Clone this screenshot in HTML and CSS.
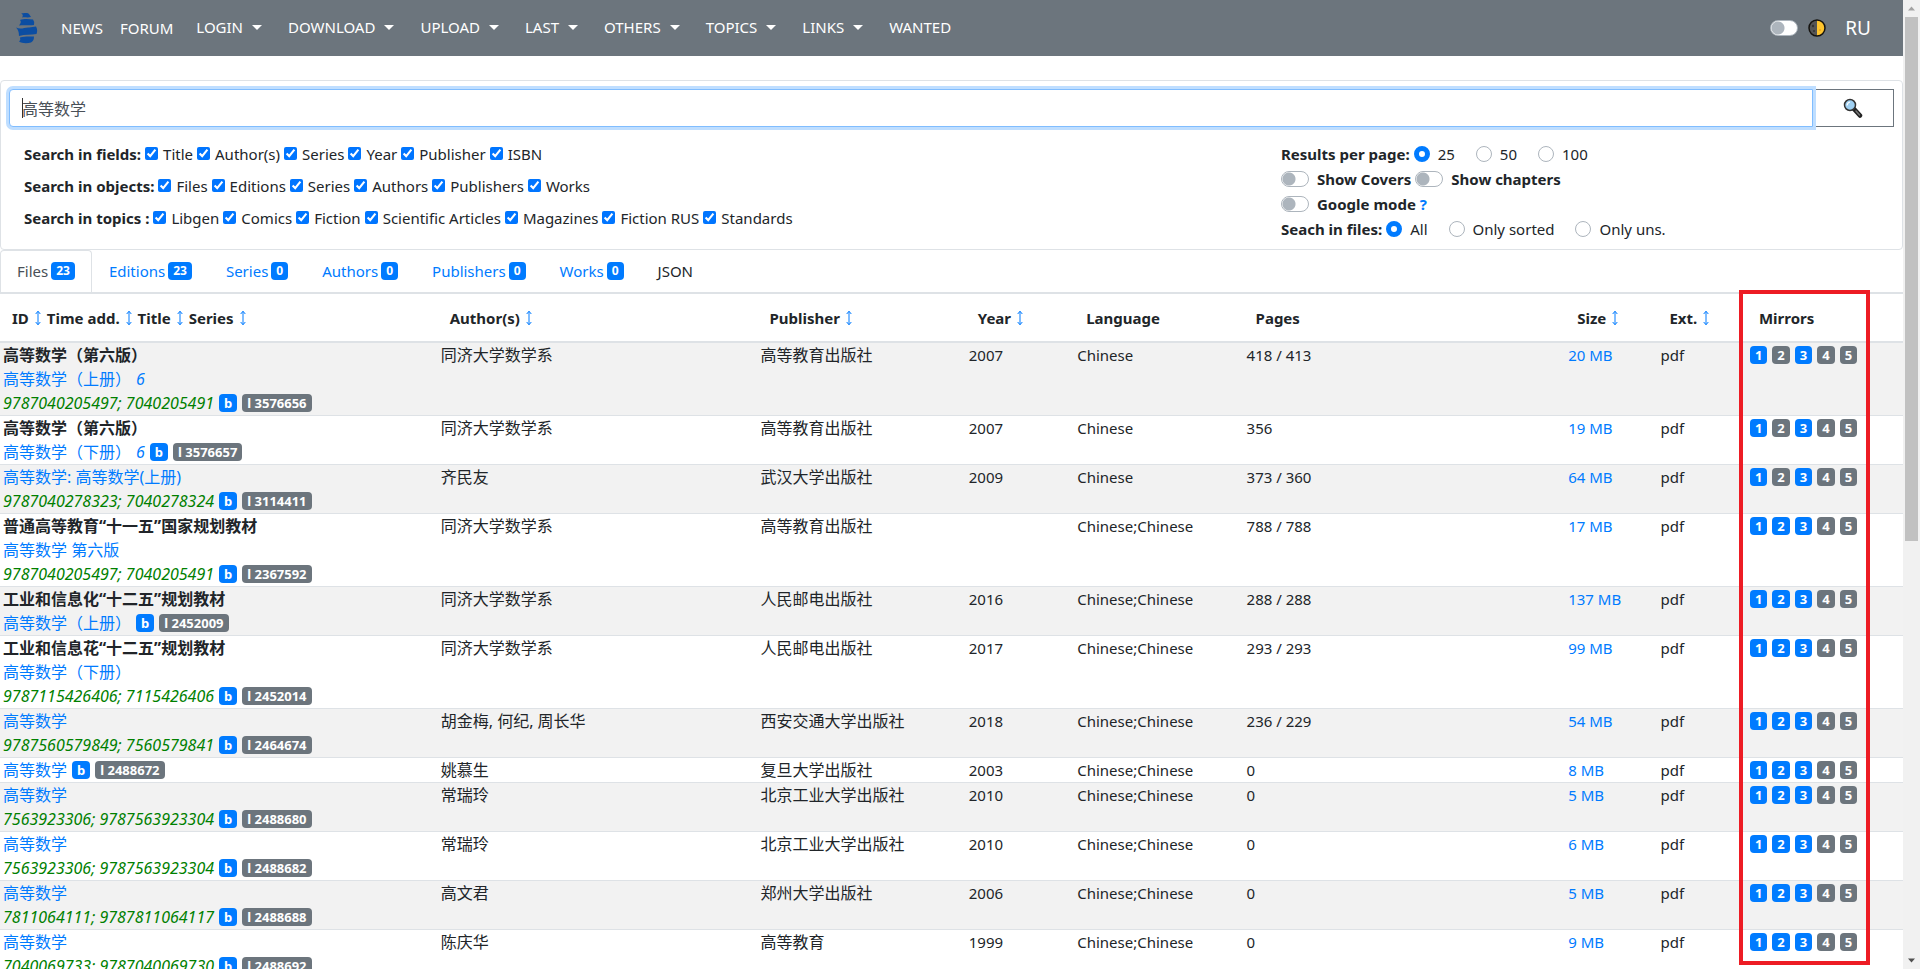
FILE: index.html
```html
<!DOCTYPE html>
<html lang="en">
<head>
<meta charset="utf-8">
<title>高等数学 - Library search</title>
<link rel="stylesheet" href="styles.css">
</head>
<body>
<svg class="defs" aria-hidden="true"><symbol id="sort" viewBox="0 0 6 16"><path d="M3 1.5V14.5M.7 4 3 1.2 5.3 4M.7 12 3 14.8 5.3 12" fill="none" stroke="currentColor" stroke-width="1"/></symbol></svg>
<div class="page">
<nav class="navbar">
  <a class="logo" href="#" aria-label="Home"><svg viewBox="0 0 22 32"><g fill="#0b4da2"><path d="M5 1C8 2 11 0 13 2L15 5C12 6 9 5 6 5.500Q8 3 5 1Z"/><path d="M4 8C8 6.500 13 7 17 7.500Q19 10 18 13C13 14 8 12.500 3 13.500Q6 10 4 8Z"/><path d="M0 15.500C5 18 9 15 13 15.500L20 14.500Q22 18 20.500 22C15 23 9 22 3 24Q3 18 0 15.500Z"/><path d="M4 25.500C9 24 14 24.500 18 24.500Q18 29 15 30.500C11 31.500 6 31.500 3 29.500Q5 28 4 25.500Z"/></g></svg></a>
  <div class="brand-links"><a href="#">NEWS</a><a href="#">FORUM</a></div>
  <div class="menus"><button class="menu">LOGIN</button><button class="menu">DOWNLOAD</button><button class="menu">UPLOAD</button><button class="menu">LAST</button><button class="menu">OTHERS</button><button class="menu">TOPICS</button><button class="menu">LINKS</button><a href="#">WANTED</a></div>
  <div class="nav-end">
    <input class="switch" type="checkbox" aria-label="Dark mode">
    <svg class="moon" viewBox="0 0 18 18"><circle cx="9" cy="9" r="8" fill="#555"/><path d="M9 1a8 8 0 0 1 0 16Z" fill="#ffc52e"/><circle cx="5" cy="7" r="1.200" fill="#333"/><circle cx="6" cy="12" r="1" fill="#333"/><circle cx="12" cy="11" r="1" fill="#e9a51c"/><circle cx="9" cy="9" r="8" fill="none" stroke="#15130f" stroke-width="1.500"/></svg>
    <a class="lang" href="#">RU</a>
  </div>
</nav>
<form class="card">
  <div class="search">
    <div class="search-box"><input class="query" type="text" value="高等数学" aria-label="Search"><span class="cursor"></span></div>
    <button class="go" type="button" aria-label="Find"><svg viewBox="0 0 20 20"><path d="M11 11 17 17.500" stroke="#222" stroke-width="4.500" stroke-linecap="round"/><path d="M13 13 16.500 17" stroke="#777" stroke-width="1.500" stroke-linecap="round"/><circle cx="7" cy="7" r="5.500" fill="#9fd0f2" stroke="#333" stroke-width="1.500"/><path d="M4 7.500Q4.500 4.500 7 4" fill="none" stroke="#fff" stroke-width="1.200"/></svg></button>
  </div>
  <div class="options">
    <div class="filters">
      <div class="line"><b>Search in fields:</b><label><input type="checkbox" checked>Title</label><label><input type="checkbox" checked>Author(s)</label><label><input type="checkbox" checked>Series</label><label><input type="checkbox" checked>Year</label><label><input type="checkbox" checked>Publisher</label><label><input type="checkbox" checked>ISBN</label></div>
      <div class="line"><b>Search in objects:</b><label><input type="checkbox" checked>Files</label><label><input type="checkbox" checked>Editions</label><label><input type="checkbox" checked>Series</label><label><input type="checkbox" checked>Authors</label><label><input type="checkbox" checked>Publishers</label><label><input type="checkbox" checked>Works</label></div>
      <div class="line"><b>Search in topics :</b><label><input type="checkbox" checked>Libgen</label><label><input type="checkbox" checked>Comics</label><label><input type="checkbox" checked>Fiction</label><label><input type="checkbox" checked>Scientific Articles</label><label><input type="checkbox" checked>Magazines</label><label><input type="checkbox" checked>Fiction RUS</label><label><input type="checkbox" checked>Standards</label></div>
    </div>
    <div class="settings">
      <div class="setting radios"><b>Results per page:</b><label><input type="radio" name="per" checked>25</label><label><input type="radio" name="per">50</label><label><input type="radio" name="per">100</label></div>
      <div class="setting"><label><input class="switch" type="checkbox"><b>Show Covers</b></label><label><input class="switch" type="checkbox"><b>Show chapters</b></label></div>
      <div class="setting"><label><input class="switch" type="checkbox"><b>Google mode</b></label><a href="#"><b>?</b></a></div>
      <div class="setting radios"><b>Seach in files:</b><label><input type="radio" name="in" checked>All</label><label><input type="radio" name="in">Only sorted</label><label><input type="radio" name="in">Only uns.</label></div>
    </div>
  </div>
</form>
<div class="tabs">
  <a class="tab active" href="#">Files <span class="badge">23</span></a><a class="tab" href="#">Editions <span class="badge">23</span></a><a class="tab" href="#">Series <span class="badge">0</span></a><a class="tab" href="#">Authors <span class="badge">0</span></a><a class="tab" href="#">Publishers <span class="badge">0</span></a><a class="tab" href="#">Works <span class="badge">0</span></a><a class="tab plain" href="#">JSON</a>
</div>
<div class="results">
<table>
<colgroup><col class="c-title"><col class="c-author"><col class="c-publisher"><col class="c-year"><col class="c-language"><col class="c-pages"><col class="c-size"><col class="c-ext"><col class="c-mirrors"></colgroup>
<thead><tr>
<th><div class="heads"><span>ID</span><svg class="sort"><use href="#sort"/></svg><span>Time add.</span><svg class="sort"><use href="#sort"/></svg><span>Title</span><svg class="sort"><use href="#sort"/></svg><span>Series</span><svg class="sort"><use href="#sort"/></svg></div></th>
<th><div class="heads"><span>Author(s)</span><svg class="sort"><use href="#sort"/></svg></div></th>
<th><div class="heads"><span>Publisher</span><svg class="sort"><use href="#sort"/></svg></div></th>
<th><div class="heads"><span>Year</span><svg class="sort"><use href="#sort"/></svg></div></th>
<th>Language</th><th>Pages</th>
<th><div class="heads"><span>Size</span><svg class="sort"><use href="#sort"/></svg></div></th>
<th><div class="heads"><span>Ext.</span><svg class="sort"><use href="#sort"/></svg></div></th>
<th>Mirrors</th>
</tr></thead>
<tbody>
<tr><td><div class="cjk"><b>高等数学（第六版）</b></div><div class="cjk"><a href="#">高等数学（上册）</a><a class="issue" href="#">6</a></div><div class="isbn"><i>9787040205497; 7040205491</i><span class="badge">b</span><span class="badge grey">l 3576656</span></div></td><td class="cjk">同济大学数学系</td><td class="cjk">高等教育出版社</td><td>2007</td><td>Chinese</td><td>418 / 413</td><td><a href="#">20 MB</a></td><td>pdf</td><td><div class="mirrors"><a class="badge" href="#">1</a><a class="badge grey" href="#">2</a><a class="badge" href="#">3</a><a class="badge grey" href="#">4</a><a class="badge grey" href="#">5</a></div></td></tr>
<tr><td><div class="cjk"><b>高等数学（第六版）</b></div><div class="cjk"><a href="#">高等数学（下册）</a><a class="issue" href="#">6</a><span class="badge">b</span><span class="badge grey">l 3576657</span></div></td><td class="cjk">同济大学数学系</td><td class="cjk">高等教育出版社</td><td>2007</td><td>Chinese</td><td>356</td><td><a href="#">19 MB</a></td><td>pdf</td><td><div class="mirrors"><a class="badge" href="#">1</a><a class="badge grey" href="#">2</a><a class="badge" href="#">3</a><a class="badge grey" href="#">4</a><a class="badge grey" href="#">5</a></div></td></tr>
<tr><td><div class="cjk"><a href="#">高等数学: 高等数学(上册)</a></div><div class="isbn"><i>9787040278323; 7040278324</i><span class="badge">b</span><span class="badge grey">l 3114411</span></div></td><td class="cjk">齐民友</td><td class="cjk">武汉大学出版社</td><td>2009</td><td>Chinese</td><td>373 / 360</td><td><a href="#">64 MB</a></td><td>pdf</td><td><div class="mirrors"><a class="badge" href="#">1</a><a class="badge grey" href="#">2</a><a class="badge" href="#">3</a><a class="badge grey" href="#">4</a><a class="badge grey" href="#">5</a></div></td></tr>
<tr><td><div class="cjk"><b>普通高等教育“十一五”国家规划教材</b></div><div class="cjk"><a href="#">高等数学 第六版</a></div><div class="isbn"><i>9787040205497; 7040205491</i><span class="badge">b</span><span class="badge grey">l 2367592</span></div></td><td class="cjk">同济大学数学系</td><td class="cjk">高等教育出版社</td><td></td><td>Chinese;Chinese</td><td>788 / 788</td><td><a href="#">17 MB</a></td><td>pdf</td><td><div class="mirrors"><a class="badge" href="#">1</a><a class="badge" href="#">2</a><a class="badge" href="#">3</a><a class="badge grey" href="#">4</a><a class="badge grey" href="#">5</a></div></td></tr>
<tr><td><div class="cjk"><b>工业和信息化“十二五”规划教材</b></div><div class="cjk"><a href="#">高等数学（上册）</a><span class="badge">b</span><span class="badge grey">l 2452009</span></div></td><td class="cjk">同济大学数学系</td><td class="cjk">人民邮电出版社</td><td>2016</td><td>Chinese;Chinese</td><td>288 / 288</td><td><a href="#">137 MB</a></td><td>pdf</td><td><div class="mirrors"><a class="badge" href="#">1</a><a class="badge" href="#">2</a><a class="badge" href="#">3</a><a class="badge grey" href="#">4</a><a class="badge grey" href="#">5</a></div></td></tr>
<tr><td><div class="cjk"><b>工业和信息花“十二五”规划教材</b></div><div class="cjk"><a href="#">高等数学（下册）</a></div><div class="isbn"><i>9787115426406; 7115426406</i><span class="badge">b</span><span class="badge grey">l 2452014</span></div></td><td class="cjk">同济大学数学系</td><td class="cjk">人民邮电出版社</td><td>2017</td><td>Chinese;Chinese</td><td>293 / 293</td><td><a href="#">99 MB</a></td><td>pdf</td><td><div class="mirrors"><a class="badge" href="#">1</a><a class="badge" href="#">2</a><a class="badge" href="#">3</a><a class="badge grey" href="#">4</a><a class="badge grey" href="#">5</a></div></td></tr>
<tr><td><div class="cjk"><a href="#">高等数学</a></div><div class="isbn"><i>9787560579849; 7560579841</i><span class="badge">b</span><span class="badge grey">l 2464674</span></div></td><td class="cjk">胡金梅, 何纪, 周长华</td><td class="cjk">西安交通大学出版社</td><td>2018</td><td>Chinese;Chinese</td><td>236 / 229</td><td><a href="#">54 MB</a></td><td>pdf</td><td><div class="mirrors"><a class="badge" href="#">1</a><a class="badge" href="#">2</a><a class="badge" href="#">3</a><a class="badge grey" href="#">4</a><a class="badge grey" href="#">5</a></div></td></tr>
<tr><td><div class="cjk"><a href="#">高等数学</a><span class="badge">b</span><span class="badge grey">l 2488672</span></div></td><td class="cjk">姚慕生</td><td class="cjk">复旦大学出版社</td><td>2003</td><td>Chinese;Chinese</td><td>0</td><td><a href="#">8 MB</a></td><td>pdf</td><td><div class="mirrors"><a class="badge" href="#">1</a><a class="badge" href="#">2</a><a class="badge" href="#">3</a><a class="badge grey" href="#">4</a><a class="badge grey" href="#">5</a></div></td></tr>
<tr><td><div class="cjk"><a href="#">高等数学</a></div><div class="isbn"><i>7563923306; 9787563923304</i><span class="badge">b</span><span class="badge grey">l 2488680</span></div></td><td class="cjk">常瑞玲</td><td class="cjk">北京工业大学出版社</td><td>2010</td><td>Chinese;Chinese</td><td>0</td><td><a href="#">5 MB</a></td><td>pdf</td><td><div class="mirrors"><a class="badge" href="#">1</a><a class="badge" href="#">2</a><a class="badge" href="#">3</a><a class="badge grey" href="#">4</a><a class="badge grey" href="#">5</a></div></td></tr>
<tr><td><div class="cjk"><a href="#">高等数学</a></div><div class="isbn"><i>7563923306; 9787563923304</i><span class="badge">b</span><span class="badge grey">l 2488682</span></div></td><td class="cjk">常瑞玲</td><td class="cjk">北京工业大学出版社</td><td>2010</td><td>Chinese;Chinese</td><td>0</td><td><a href="#">6 MB</a></td><td>pdf</td><td><div class="mirrors"><a class="badge" href="#">1</a><a class="badge" href="#">2</a><a class="badge" href="#">3</a><a class="badge grey" href="#">4</a><a class="badge grey" href="#">5</a></div></td></tr>
<tr><td><div class="cjk"><a href="#">高等数学</a></div><div class="isbn"><i>7811064111; 9787811064117</i><span class="badge">b</span><span class="badge grey">l 2488688</span></div></td><td class="cjk">高文君</td><td class="cjk">郑州大学出版社</td><td>2006</td><td>Chinese;Chinese</td><td>0</td><td><a href="#">5 MB</a></td><td>pdf</td><td><div class="mirrors"><a class="badge" href="#">1</a><a class="badge" href="#">2</a><a class="badge" href="#">3</a><a class="badge grey" href="#">4</a><a class="badge grey" href="#">5</a></div></td></tr>
<tr><td><div class="cjk"><a href="#">高等数学</a></div><div class="isbn"><i>7040069733; 9787040069730</i><span class="badge">b</span><span class="badge grey">l 2488692</span></div></td><td class="cjk">陈庆华</td><td class="cjk">高等教育</td><td>1999</td><td>Chinese;Chinese</td><td>0</td><td><a href="#">9 MB</a></td><td>pdf</td><td><div class="mirrors"><a class="badge" href="#">1</a><a class="badge" href="#">2</a><a class="badge" href="#">3</a><a class="badge grey" href="#">4</a><a class="badge grey" href="#">5</a></div></td></tr>
</tbody>
</table>
</div>
<div class="highlight"></div>
</div>
<div class="scrollbar"><svg viewBox="0 0 17 17"><path d="M5 10.500 8.500 6.500 12 10.500Z" fill="#a3a3a3"/></svg><div class="track"><div class="thumb"></div></div><svg viewBox="0 0 17 17"><path d="M5 6.500 8.500 10.500 12 6.500Z" fill="#505050"/></svg></div>
</body>
</html>
```
FILE: styles.css
```css
* { box-sizing: border-box; }
body {
  margin: 0;
  height: 100vh;
  overflow: hidden;
  display: grid;
  grid-template-columns: minmax(0, 1fr) 17px;
  background: #fff;
  color: #212529;
  font: 15px/24px "Noto Sans", "Noto Sans CJK SC", sans-serif;
}
a { color: #007bff; text-decoration: none; }
button, input { font: inherit; margin: 0; }
.defs { position: absolute; width: 0; height: 0; }
.page { position: relative; height: 100vh; overflow: hidden; }

.navbar {
  display: flex;
  align-items: center;
  height: 56px;
  padding: 0 32px 0 16px;
  background: #6c757d;
}
.navbar a, .menu { color: #fff; }
.logo { display: flex; }
.logo svg { width: 22px; height: 32px; }
.brand-links { display: flex; gap: 17px; margin-left: 23px; }
.menus { display: flex; gap: 26px; margin-left: 23px; padding-bottom: 2px; }
.menu {
  display: flex;
  align-items: center;
  gap: 9px;
  padding: 0;
  border: 0;
  background: none;
}
.menu::after {
  content: "";
  border: 5px solid transparent;
  border-top-color: currentColor;
  border-bottom: 0;
}
.nav-end { display: flex; align-items: center; gap: 10px; margin-left: auto; }
.moon { width: 18px; height: 18px; }
.lang { margin-left: 9px; font-size: 19px; }

.card {
  margin-top: 24px;
  padding: 8px;
  height: 170px;
  border: 1px solid #dee2e6;
  border-radius: 4px;
}
.search { display: flex; }
.search-box { position: relative; flex: 1; }
.query {
  display: block;
  width: 100%;
  height: 38px;
  padding: 0 12px;
  border: 1px solid #80bdff;
  border-radius: 4px 0 0 4px;
  outline: 0;
  box-shadow: 0 0 0 3px #bfdeff;
  color: #495057;
  font-size: 16px;
}
.cursor { position: absolute; left: 13px; top: 9px; width: 1px; height: 20px; background: #333; }
.go {
  display: flex;
  align-items: center;
  justify-content: center;
  width: 81px;
  border: 1px solid #6c757d;
  border-left: 0;
  background: #fff;
}
.go svg { width: 20px; height: 20px; }
.options { display: flex; padding: 15px 15px 0; }
.filters { flex: 1; display: flex; flex-direction: column; gap: 8px; }
.line { display: flex; gap: 4px; }
.line label { display: flex; align-items: center; gap: 5px; }
.line input { width: 13px; height: 13px; margin-bottom: 2px; accent-color: #0075ff; }
.settings { display: flex; flex-direction: column; gap: 1px; width: 598px; }
.setting { display: flex; gap: 4px; height: 24px; }
.setting label { display: flex; align-items: center; gap: 8px; }
.radios label { margin-right: 17px; }
.radios input {
  appearance: none;
  width: 16px;
  height: 16px;
  border: 1px solid #adb5bd;
  border-radius: 50%;
  background: #fff;
}
.radios input:checked { border: 5px solid #007bff; }
.switch {
  appearance: none;
  width: 28px;
  height: 16px;
  border: 1px solid #adb5bd;
  border-radius: 8px;
  background: radial-gradient(circle at 7px 7px, #adb5bd 6px, #fff 7px);
}

.tabs { display: flex; border-bottom: 1px solid #dee2e6; }
.tab {
  display: flex;
  align-items: center;
  gap: 3px;
  height: 42px;
  padding: 0 16px 2px;
  border: 1px solid transparent;
  border-bottom: 0;
  border-radius: 4px 4px 0 0;
}
.tab.active { border-color: #dee2e6; color: #495057; }
.tab.plain { color: #212529; }
.badge {
  display: inline-block;
  height: 18px;
  padding: 0 5px;
  border-radius: 4px;
  background: #007bff;
  color: #fff;
  font-size: 13px;
  font-weight: 700;
  line-height: 18px;
  white-space: nowrap;
}
.tab .badge { font-size: 12px; }
.badge.grey { background: #6c757d; }

table { width: 100%; table-layout: fixed; border-collapse: collapse; }
.c-title { width: 23%; }
.c-author { width: 16.8%; }
.c-publisher { width: 10.95%; }
.c-year { width: 5.7%; }
.c-language { width: 8.9%; }
.c-pages { width: 16.9%; }
.c-size { width: 4.85%; }
.c-ext { width: 4.7%; }
.c-mirrors { width: 8.2%; }
th { padding: 12px 12px 11px; border-top: 1px solid #dee2e6; border-bottom: 2px solid #dee2e6; text-align: left; }
.heads { display: flex; align-items: center; gap: 6px; }
.sort { width: 6px; height: 16px; color: #007bff; }
td { padding: 0 3px; border-top: 1px solid #dee2e6; vertical-align: top; white-space: nowrap; }
tbody tr:nth-child(odd) { background: #f2f2f2; }
.cjk { font-size: 16px; }
div.cjk, .isbn, .mirrors { display: flex; align-items: center; gap: 5px; height: 24px; }
.isbn i { color: green; font-size: 16px; }
.issue { font-style: italic; }

.highlight {
  position: absolute;
  top: 290px;
  right: 33px;
  bottom: 4px;
  width: 131px;
  border: 4px solid #ed1c24;
}
.scrollbar { display: flex; flex-direction: column; background: #f1f1f1; }
.scrollbar svg { width: 17px; height: 17px; }
.track { flex: 1; padding: 0 2px; }
.thumb { height: 56%; background: #c1c1c1; }
```
